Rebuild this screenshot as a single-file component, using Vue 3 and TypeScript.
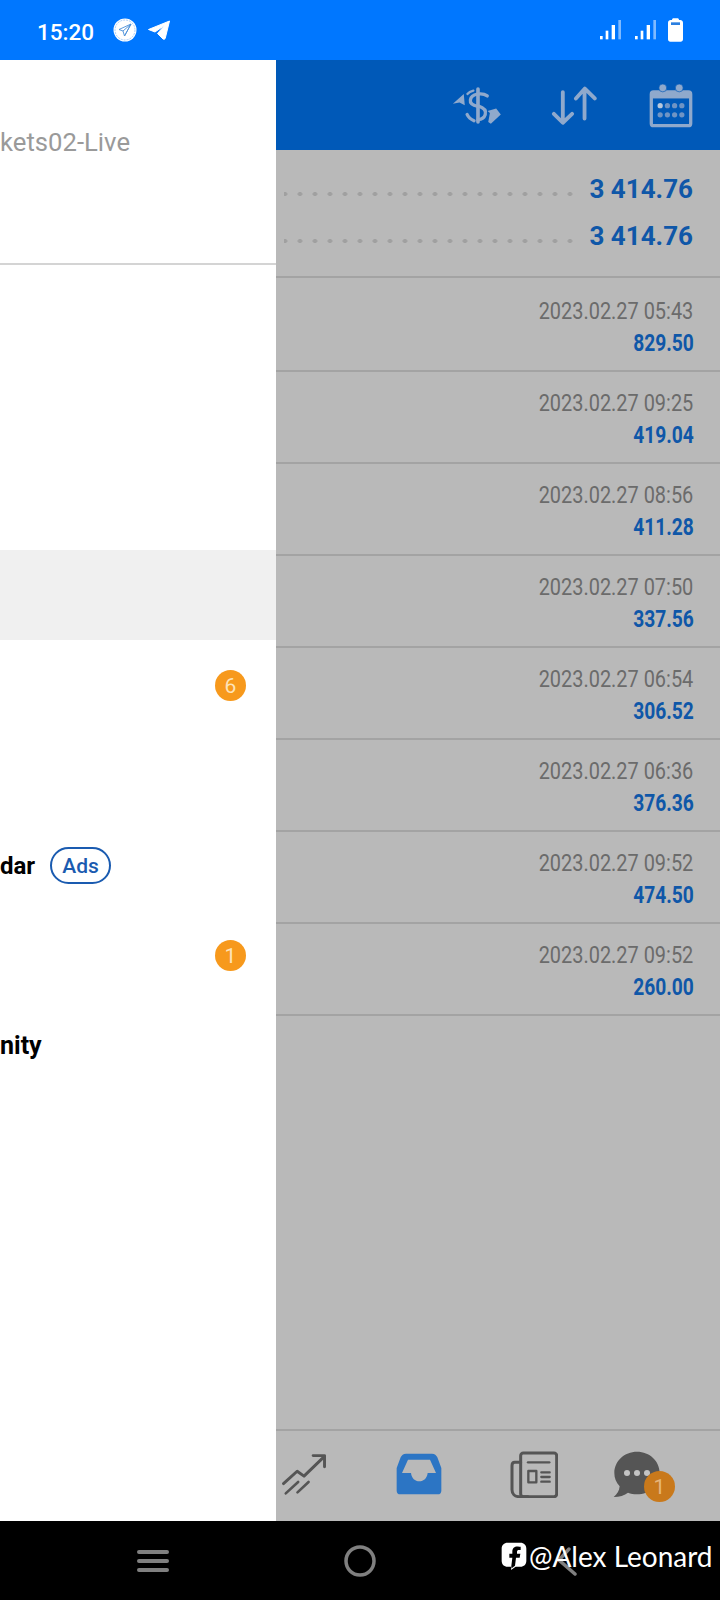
<script setup lang="ts">
interface MenuRow {
  label?: string
  badge?: number
  ads?: boolean
  active?: boolean
}

interface Deal {
  time: string
  amount: string
}

const menu: MenuRow[] = [
  {},
  {},
  {},
  { active: true },
  { badge: 6 },
  {},
  { label: 'dar', ads: true },
  { badge: 1 },
  { label: 'nity' },
]

const deals: Deal[] = [
  { time: '2023.02.27 05:43', amount: '829.50' },
  { time: '2023.02.27 09:25', amount: '419.04' },
  { time: '2023.02.27 08:56', amount: '411.28' },
  { time: '2023.02.27 07:50', amount: '337.56' },
  { time: '2023.02.27 06:54', amount: '306.52' },
  { time: '2023.02.27 06:36', amount: '376.36' },
  { time: '2023.02.27 09:52', amount: '474.50' },
  { time: '2023.02.27 09:52', amount: '260.00' },
]
</script>

<template>
  <div class="screen">
    <header class="status">
      <span class="clock">15:20</span>
      <svg class="tg-round" width="24" height="24" viewBox="0 0 24 24">
        <circle cx="12" cy="12" r="11.5" fill="#fff" />
        <circle cx="12" cy="12" r="10" fill="none" stroke="#7fb6f5" stroke-width="0.7" stroke-dasharray="2 1" />
        <path d="M18 6 6 11.500l4 1.500 1.500 5L18 6Zm-8 7 8-7-6.500 12" fill="none" stroke="#4a8fd8" stroke-width="0.9" stroke-linejoin="round" />
      </svg>
      <svg class="tg-plane" width="22" height="20" viewBox="0 0 22 20">
        <path d="M21.500 1 .5 9.500l6.500 2.500L17 5l-7.500 8.500 5.500 5.500c1 .6 2 .3 2.300-1Z" fill="#fff" stroke="#fff" stroke-linejoin="round" />
      </svg>
      <span class="status-gap" />
      <svg v-for="n in 2" :key="n" class="signal" width="21" height="20" viewBox="0 0 63 60">
        <rect x="0" y="48" width="8" height="10" fill="#fff" />
        <rect x="17" y="32" width="8" height="26" fill="#fff" />
        <rect x="35" y="15" width="10" height="43" fill="#fff" />
        <rect x="55" y="0" width="8" height="58" fill="#7fbaff" />
      </svg>
      <svg class="battery" width="15" height="24" viewBox="0 0 45 72">
        <path d="M12 6c0-3 2-5 5-5h11c3 0 5 2 5 5h4c4 0 8 3 8 8v50c0 4-3 7-7 7H7c-4 0-7-3-7-7V14c0-5 4-8 8-8Z" fill="#fff" />
        <rect x="9" y="13" width="27" height="8" fill="#2b7fe0" />
      </svg>
    </header>

    <div class="body">
      <aside class="drawer">
        <div class="account">
          <span class="server">kets02-Live</span>
        </div>
        <nav class="menu">
          <div v-for="(row, i) in menu" :key="i" class="menu-row" :class="{ active: row.active }">
            <span v-if="row.label" class="menu-label" :class="{ tight: row.ads }">{{ row.label }}</span>
            <span v-if="row.ads" class="ads">Ads</span>
            <span v-if="row.badge" class="count">{{ row.badge }}</span>
          </div>
        </nav>
      </aside>

      <main class="content">
        <div class="toolbar">
          <svg class="tool-swap" width="50" height="39" viewBox="278 254 150 118">
            <g fill="none" stroke="#8fa9cc" stroke-linecap="round">
              <path d="M356 263v100" stroke-width="11" />
              <path d="M384 284c-14-10-48-8-51 12-2 12 10 17 23 20" stroke-width="10" />
              <path d="M356 314c16 5 26 13 22 26-3 10-12 15-22 16" stroke-width="10" />
              <path d="M323 340c4 9 11 15 21 19" stroke-width="10" />
              <path d="M342 268c-8 2-14 5-18 10" stroke-width="7" />
            </g>
            <path d="M280 308 313 278l3 34-16-8Z" fill="#8fa9cc" />
            <path d="M425 340 395 368l-8-5 5-27-7-6 26-8Z" fill="#8fa9cc" />
          </svg>
          <svg class="tool-sort" width="46" height="39" viewBox="570 255 144 118">
            <g fill="none" stroke="#8fa9cc" stroke-width="12" stroke-linecap="round" stroke-linejoin="round">
              <path d="M607 272v92M579 340l28 28 29-28" />
              <path d="M675 355V262M648 292l28-31 31 31" />
            </g>
          </svg>
          <svg class="tool-date" width="44" height="45" viewBox="866 244 134 135">
            <rect x="873" y="270" width="120" height="103" rx="7" fill="none" stroke="#8fa9cc" stroke-width="10" />
            <rect x="873" y="270" width="120" height="20" fill="#8fa9cc" />
            <circle cx="908" cy="258" r="12" fill="#8fa9cc" stroke="#0059b8" stroke-width="2" />
            <circle cx="958" cy="258" r="12" fill="#8fa9cc" stroke="#0059b8" stroke-width="2" />
            <g fill="#6f94c4">
              <circle cx="900" cy="312" r="8" fill="#b8c8dc" />
              <circle cx="922" cy="312" r="8" />
              <circle cx="944" cy="312" r="8" />
              <circle cx="966" cy="312" r="8" />
              <circle cx="900" cy="340" r="8" />
              <circle cx="922" cy="340" r="8" />
              <circle cx="944" cy="340" r="8" />
              <circle cx="966" cy="340" r="8" />
            </g>
          </svg>
        </div>

        <section class="summary">
          <div v-for="n in 2" :key="n" class="summary-row">
            <span class="leader" />
            <span class="summary-value">3 414.76</span>
          </div>
        </section>

        <ul class="deals">
          <li v-for="(deal, i) in deals" :key="i" class="deal">
            <span class="deal-time">{{ deal.time }}</span>
            <span class="deal-amount">{{ deal.amount }}</span>
          </li>
        </ul>

        <footer class="tabs">
          <div class="tab">
            <svg width="46" height="43" viewBox="26 96 140 132">
              <g fill="none" stroke="#555" stroke-width="9" stroke-linecap="round" stroke-linejoin="round">
                <path d="M33 190 75 152l21 15 62-60" />
                <path d="M124 104h35v34" />
                <path d="M40 220 78 185M76 217l34-32" stroke-width="8" />
              </g>
            </svg>
          </div>
          <div class="tab">
            <svg width="46" height="42" viewBox="0 0 138 126">
              <path fill-rule="evenodd" d="M30 2h78c8 0 13 5 16 11l12 32v68c0 7-4 11-11 11H13c-7 0-11-4-11-11V45l12-32C17 7 22 2 30 2Zm6 18L18 60h27c2 16 12 25 25 25s23-9 25-25h25L102 20Z" fill="#2c75c4" />
            </svg>
          </div>
          <div class="tab">
            <svg width="48" height="47" viewBox="0 0 144 141">
              <g fill="none" stroke="#555" stroke-linecap="round" stroke-linejoin="round">
                <rect x="32" y="6" width="108" height="131" rx="8" stroke-width="9" />
                <path d="M32 34H14c-6 0-8 4-8 10v72c0 12 8 21 22 21h26" stroke-width="9" />
                <path d="M54 34h64" stroke-width="7" />
                <rect x="55" y="60" width="24" height="34" stroke-width="7" />
                <path d="M94 64h25M94 78h25M94 92h25" stroke-width="7" />
              </g>
            </svg>
          </div>
          <div class="tab tab-chat">
            <svg width="48" height="47" viewBox="0 0 144 141">
              <path d="M72 2c38 0 68 28 68 64s-30 64-68 64c-10 0-19-2-27-5-10 8-26 13-43 13 10-8 17-18 18-32C9 94 4 81 4 66 4 30 34 2 72 2Z" fill="#555" />
              <circle cx="42" cy="66" r="9" fill="#c4c4c4" />
              <circle cx="72" cy="66" r="9" fill="#c4c4c4" />
              <circle cx="102" cy="66" r="9" fill="#c4c4c4" />
            </svg>
            <span class="chat-badge">1</span>
          </div>
        </footer>
      </main>
    </div>

    <footer class="system">
      <div class="system-btn">
        <svg width="32" height="22" viewBox="0 0 32 22">
          <path d="M2 2h28M2 11h28M2 20h28" stroke="#808080" stroke-width="4" stroke-linecap="round" />
        </svg>
      </div>
      <div class="system-btn">
        <svg width="32" height="32" viewBox="0 0 32 32">
          <circle cx="16" cy="16" r="14" fill="none" stroke="#808080" stroke-width="3.500" />
        </svg>
      </div>
      <div class="system-btn">
        <svg width="22" height="30" viewBox="0 0 22 30">
          <path d="M19 28 3 14 13 3" fill="none" stroke="#808080" stroke-width="3.500" stroke-linecap="round" />
        </svg>
      </div>
      <div class="watermark">
        <svg width="26" height="28" viewBox="0 0 78 84">
          <path fill-rule="evenodd" d="M20 2h38c11 0 18 7 18 18v36c0 11-7 18-18 18H44l-14 10 2-10H20C9 74 2 67 2 56V20C2 9 9 2 20 2Zm34 12c-12-2-20 4-20 15v6h-9v12h9l-4 33 12-9 3-24h11l2-12H48v-5c0-4 2-6 6-6h5V14Z" fill="#fff" />
        </svg>
        <span class="watermark-name">@Alex Leonard</span>
      </div>
    </footer>
  </div>
</template>

<style scoped>
.screen {
  width: 720px;
  height: 1600px;
  display: flex;
  flex-direction: column;
  overflow: hidden;
  font-family: Roboto, "Noto Sans", sans-serif;
}

.status {
  height: 60px;
  flex: none;
  display: flex;
  align-items: center;
  padding: 0 37px;
  background: #0077ff;
  color: #fff;
}

.clock {
  font-size: 22.500px;
  font-weight: 500;
  line-height: 60px;
  padding-top: 3px;
}

.tg-round {
  margin-left: 19px;
}

.tg-plane {
  margin-left: 11px;
}

.status-gap {
  flex: 1;
}

.signal {
  margin-right: 14px;
}

.signal + .battery {
  margin-left: -2px;
}

.body {
  flex: 1;
  display: flex;
  min-height: 0;
}

.drawer {
  width: 276px;
  flex: none;
  background: #fff;
}

.account {
  height: 205px;
  padding-top: 65px;
  box-sizing: border-box;
  border-bottom: 2px solid #d4d4d4;
}

.server {
  font-size: 25.700px;
  line-height: 34px;
  color: #9a9a9a;
  display: block;
}

.menu {
  padding-top: 15px;
}

.menu-row {
  height: 90px;
  box-sizing: border-box;
  display: flex;
  align-items: center;
  padding: 1px 30px 0 0;
}

.menu-row.active {
  background: #f0f0f0;
}

.menu-label {
  font-size: 25px;
  font-weight: 700;
  color: #000;
}

.menu-label.tight {
  font-size: 24px;
}

.ads {
  margin-left: 15px;
  width: 61px;
  height: 37px;
  box-sizing: border-box;
  display: flex;
  align-items: center;
  justify-content: center;
  border: 2px solid #1a5bb0;
  border-radius: 19px;
  color: #1a5bb0;
  font-size: 21px;
  font-weight: 500;
}

.count {
  margin-left: auto;
  width: 31px;
  height: 31px;
  border-radius: 50%;
  display: flex;
  align-items: center;
  justify-content: center;
  background: #f7991c;
  color: #fde3b8;
  font-size: 21px;
}

.content {
  flex: 1;
  min-width: 0;
  display: flex;
  flex-direction: column;
  background: #b9b9b9;
}

.toolbar {
  height: 90px;
  flex: none;
  display: flex;
  align-items: center;
  justify-content: flex-end;
  padding-right: 27px;
  box-sizing: border-box;
  background: #0059b8;
}

.tool-sort {
  margin-left: 49px;
}

.tool-date {
  margin-left: 52px;
}

.summary {
  height: 128px;
  flex: none;
  box-sizing: border-box;
  padding: 16px 27px 0 0;
  border-bottom: 2px solid #a3a3a3;
}

.summary-row {
  height: 47px;
  display: flex;
}

.leader {
  flex: 1;
  height: 6px;
  margin: 25px 12px 0 8px;
  background: radial-gradient(circle, #a0a0a0 2px, transparent 2.500px) right center / 15px 6px repeat-x;
}

.summary-value {
  font-size: 26px;
  font-weight: 700;
  line-height: 47px;
  color: #0f57a8;
}

.deals {
  list-style: none;
  margin: 0;
  padding: 2px 0 0;
  flex: 1;
}

.deal {
  height: 92px;
  box-sizing: border-box;
  padding: 15px 26px 0 0;
  border-bottom: 2px solid #a3a3a3;
  display: flex;
  flex-direction: column;
  align-items: flex-end;
}

.deal-time,
.deal-amount {
  line-height: 32px;
  font-size: 24px;
  transform-origin: right center;
  white-space: nowrap;
}

.deal-time {
  margin-right: 1px;
  transform: scaleX(0.83);
  color: #6b6b6b;
}

.deal-amount {
  transform: scaleX(0.8);
  font-weight: 700;
  color: #0f57a8;
}

.tabs {
  height: 92px;
  flex: none;
  box-sizing: border-box;
  border-top: 2px solid #a3a3a3;
  padding: 0 14px 4px 0;
  display: grid;
  grid-template-columns: repeat(4, 115px);
  justify-content: end;
  overflow: hidden;
}

.tab {
  position: relative;
  display: flex;
  align-items: center;
  justify-content: center;
}

.tab-chat svg {
  margin-right: 24px;
}

.chat-badge {
  position: absolute;
  left: 53px;
  top: 40px;
  width: 31px;
  height: 31px;
  border-radius: 50%;
  display: flex;
  align-items: center;
  justify-content: center;
  background: #c9791b;
  color: #e6b67c;
  font-size: 21px;
}

.system {
  position: relative;
  height: 79px;
  flex: none;
  background: #000;
  display: grid;
  grid-template-columns: repeat(3, 207px);
  justify-content: center;
}

.system-btn {
  display: flex;
  align-items: center;
  justify-content: center;
}

.watermark {
  position: absolute;
  left: 501px;
  top: 18px;
  display: flex;
  align-items: center;
  gap: 2px;
  color: #fff;
  font-family: Lato, "Open Sans", sans-serif;
  font-size: 28px;
  line-height: 34px;
  white-space: nowrap;
}

.watermark-name {
  margin-top: 0;
}
</style>

<style>
html,
body {
  margin: 0;
  background: #000;
}
</style>
